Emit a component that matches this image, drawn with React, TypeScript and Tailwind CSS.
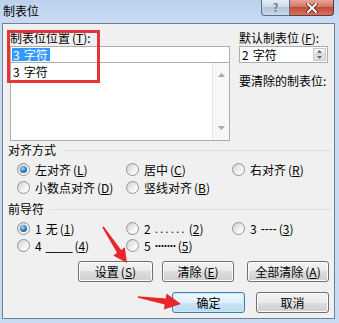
import React from "react";

const FONT = "font-['Noto_Sans_CJK_SC','Noto_Sans',sans-serif]";
const LAT = "font-['Liberation_Sans',sans-serif]";

function Radio({ checked }: { checked?: boolean }) {
  return (
    <span className="w-[13px] h-[13px] rounded-full border border-[#929292] bg-[linear-gradient(135deg,#cfcfcf,#f4f4f4_60%,#ffffff)] flex items-center justify-center shrink-0">
      {checked && (
        <span className="w-[7px] h-[7px] rounded-full bg-[radial-gradient(circle_at_40%_35%,#a8dcf8,#2f75b5_55%,#173f6e)]" />
      )}
    </span>
  );
}

function Opt({ checked, children }: { checked?: boolean; children: React.ReactNode }) {
  return (
    <div className="flex items-center h-[13px]">
      <Radio checked={checked} />
      <span className="ml-[5px] text-[12px] leading-[12px] whitespace-nowrap flex items-center">{children}</span>
    </div>
  );
}

function Acc({ k }: { k: string }) {
  return (
    <span className="ml-[2px]">
      (<span className="underline underline-offset-[1px]">{k}</span>)
    </span>
  );
}

function Btn({ w, focus, children }: { w: string; focus?: boolean; children: React.ReactNode }) {
  return (
    <div
      className={
        "h-[21px] rounded-[3px] border flex items-center justify-center text-[12px] leading-[12px] shrink-0 " +
        w +
        (focus
          ? " border-[#3c7fb1] bg-[linear-gradient(#eef7fc,#e0f0fa_50%,#cbe6f6_50%,#b9dcf1)] shadow-[inset_0_0_0_1px_#c9e9f9]"
          : " border-[#707070] bg-[linear-gradient(#f2f2f2,#ebebeb_50%,#dddddd_50%,#cfcfcf)] shadow-[inset_0_0_0_1px_#fcfcfc]")
      }
    >
      {children}
    </div>
  );
}

function Header({ children }: { children: React.ReactNode }) {
  return (
    <div className="flex items-center pl-[5px] pr-[3px] h-[12px]">
      <span className="text-[12px] leading-[12px] whitespace-nowrap">{children}</span>
      <div className="ml-[6px] flex-1 border-t border-[#d5dfe5] h-0" />
    </div>
  );
}

export default function App() {
  return (
    <div className={"w-[339px] h-[323px] bg-[#c9dbf1] flex flex-col relative overflow-hidden text-black " + FONT}>
      {/* title bar */}
      <div className="h-[23px] flex items-start bg-[linear-gradient(#bcd2ec,#cadcf2)]">
        <span className="ml-[3px] mt-[4px] text-[12px] leading-[13px]">制表位</span>
        <div className="ml-auto mr-[5px] flex">
          <div className="w-[29px] h-[16px] rounded-bl-[4px] border border-t-0 border-[#5f7189] bg-[linear-gradient(#e6eef8,#c9d6e6_50%,#b4c5da_50%,#c9d8ea)] flex items-center justify-center text-[11px] leading-[11px] text-[#6d7e93] font-bold">
            ?
          </div>
          <div className="w-[44px] h-[16px] rounded-br-[4px] border border-t-0 border-l-0 border-[#5f3a3a] bg-[linear-gradient(#e8a497,#d3705f_50%,#c44a36_50%,#d6725c)] flex items-center justify-center">
            <svg width="12" height="10" viewBox="0 0 12 10">
              <path d="M2 1 L10 9 M10 1 L2 9" stroke="#4a2a2a" strokeWidth="3.6" strokeLinecap="square" />
              <path d="M2 1 L10 9 M10 1 L2 9" stroke="#ffffff" strokeWidth="2" strokeLinecap="square" />
            </svg>
          </div>
        </div>
      </div>

      {/* body */}
      <div className="ml-[2px] mr-[4px] mb-[4px] flex-1 border border-[#6e819a] bg-[#f0f0f0] relative flex flex-col">
        {/* top section */}
        <div className="flex pl-[7px] pt-[8px]">
          <div className="w-[220px] flex flex-col">
            <div className="h-[12px] text-[12px] leading-[12px] whitespace-nowrap">
              制表位位置<Acc k="T" />:
            </div>
            <div className="mt-[2px] h-[17px] border border-[#abadb3] bg-white flex items-center pl-[1px]">
              <span className="bg-[#3399ff] text-white text-[12px] leading-[13px] px-[1px] pr-[2px] flex">
                <span className="mr-[4px]">3</span>字符
              </span>
            </div>
            <div className="h-[78px] border border-t-0 border-[#abadb3] bg-white flex">
              <div className="flex-1 pl-[2px] pt-[3px] text-[12px] leading-[12px] flex items-start">
                <span className="mr-[4px]">3</span>字符
              </div>
              <div className="w-[17px] border-l border-[#e6e6e6] bg-[#f7f7f7] flex flex-col items-center justify-between py-[10px]">
                <svg width="7" height="4" viewBox="0 0 7 4"><path d="M0 4 L3.5 0 L7 4Z" fill="#a8a8a8" /></svg>
                <svg width="7" height="4" viewBox="0 0 7 4"><path d="M0 0 L3.5 4 L7 0Z" fill="#a8a8a8" /></svg>
              </div>
            </div>
          </div>
          <div className="ml-[9px] w-[89px] flex flex-col">
            <div className="h-[12px] text-[12px] leading-[12px] whitespace-nowrap">
              默认制表位<Acc k="F" />:
            </div>
            <div className="mt-[2px] h-[17px] border border-[#abadb3] bg-white flex items-stretch">
              <span className="flex-1 pl-[2px] text-[12px] leading-[15px]">
                <span className="mr-[4px]">2</span>字符
              </span>
              <div className="w-[13px] my-[1px] mr-[1px] flex flex-col border border-[#c8cdd3] bg-[linear-gradient(#f4f4f4,#dcdcdc)]">
                <div className="flex-1 flex items-center justify-center border-b border-[#c8cdd3]">
                  <svg width="5" height="3" viewBox="0 0 5 3"><path d="M0 3 L2.5 0 L5 3Z" fill="#6a6a6a" /></svg>
                </div>
                <div className="flex-1 flex items-center justify-center">
                  <svg width="5" height="3" viewBox="0 0 5 3"><path d="M0 0 L2.5 3 L5 0Z" fill="#6a6a6a" /></svg>
                </div>
              </div>
            </div>
            <div className="mt-[12px] h-[12px] text-[12px] leading-[12px] whitespace-nowrap">要清除的制表位:</div>
          </div>
        </div>

        {/* alignment */}
        <div className="mt-[3px]">
          <Header>对齐方式</Header>
        </div>
        <div className="mt-[7px] flex pl-[14px]">
          <div className="w-[109px]"><Opt checked>左对齐<Acc k="L" /></Opt></div>
          <div className="w-[106px]"><Opt>居中<Acc k="C" /></Opt></div>
          <div><Opt>右对齐<Acc k="R" /></Opt></div>
        </div>
        <div className="mt-[5px] flex pl-[14px]">
          <div className="w-[109px]"><Opt>小数点对齐<Acc k="D" /></Opt></div>
          <div className="w-[106px]"><Opt>竖线对齐<Acc k="B" /></Opt></div>
        </div>

        {/* leader */}
        <div className="mt-[9px]">
          <Header>前导符</Header>
        </div>
        <div className="mt-[7px] flex pl-[14px]">
          <div className="w-[109px]"><Opt checked><span className="mr-[4px]">1</span>无<Acc k="1" /></Opt></div>
          <div className="w-[106px]">
            <Opt>
              <span className="mr-[4px]">2</span>
              <span className={LAT + " tracking-[2px]"}>......</span>
              <Acc k="2" />
            </Opt>
          </div>
          <div>
            <Opt>
              <span className="mr-[4px]">3</span>
              <span className={LAT}>----</span>
              <Acc k="3" />
            </Opt>
          </div>
        </div>
        <div className="mt-[4px] flex pl-[14px]">
          <div className="w-[109px]">
            <Opt>
              <span className="mr-[4px]">4</span>
              <span className={LAT}>____</span>
              <Acc k="4" />
            </Opt>
          </div>
          <div className="w-[106px]">
            <Opt>
              <span className="mr-[4px]">5</span>
              <span className={LAT + " tracking-[-1px] font-bold"}>·······</span>
              <Acc k="5" />
            </Opt>
          </div>
        </div>

        {/* buttons */}
        <div className="mt-[9px] flex pl-[75px]">
          <Btn w="w-[75px]">设置<Acc k="S" /></Btn>
          <div className="ml-[9px]"><Btn w="w-[72px]">清除<Acc k="E" /></Btn></div>
          <div className="ml-[13px]"><Btn w="w-[82px]">全部清除<Acc k="A" /></Btn></div>
        </div>
        <div className="mt-[10px] flex pl-[169px]">
          <Btn w="w-[73px]" focus>确定</Btn>
          <div className="ml-[11px]"><Btn w="w-[73px]">取消</Btn></div>
        </div>

        {/* red highlight box */}
        <div className="absolute left-[4px] top-[6px] w-[93px] h-[53px] border-[3px] border-[#e2363b] pointer-events-none" />
      </div>

      {/* red arrows */}
      <svg className="absolute left-0 top-0 pointer-events-none" width="339" height="323" viewBox="0 0 339 323">
        <polygon
          points="102.3,227.5 117.0,252.8 113.2,255.6 127,263 124.8,247.3 121.2,250.0 103.7,226.5"
          fill="#e8262b"
        />
        <polygon
          points="138.1,296.2 165.7,298.5 166.5,293.6 181,304 163.9,309.4 164.7,304.5 137.9,297.8"
          fill="#e8262b"
        />
      </svg>
    </div>
  );
}
